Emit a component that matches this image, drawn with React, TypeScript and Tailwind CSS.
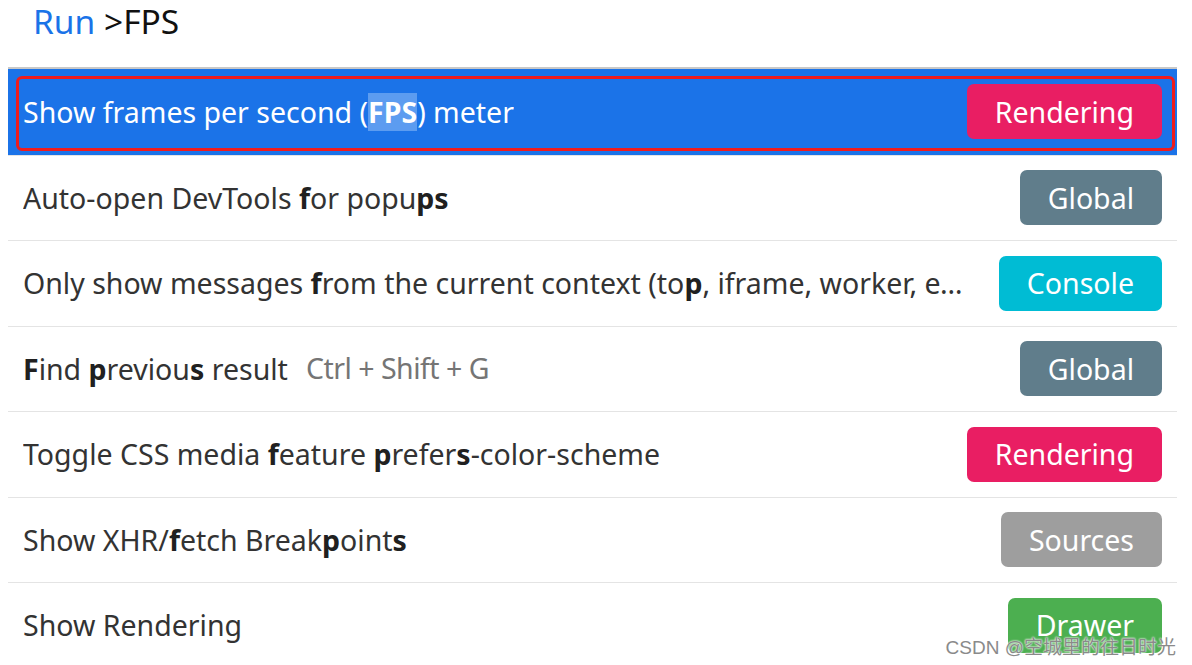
import React from "react";

type Seg = { t: string; b?: boolean; hl?: boolean };

const badgeColors: Record<string, string> = {
  Rendering: "bg-[#e91e63]",
  Global: "bg-[#607d8b]",
  Console: "bg-[#00bcd4]",
  Sources: "bg-[#9e9e9e]",
  Drawer: "bg-[#4caf50]",
};

function Badge({ name }: { name: string }) {
  return (
    <span
      className={`${badgeColors[name]} shrink-0 h-[55px] px-[28px] rounded-[7px] flex items-center text-white text-[28.5px] leading-none`}
    >
      {name}
    </span>
  );
}

function Row({
  segs,
  badge,
  shortcut,
  selected,
}: {
  segs: Seg[];
  badge: string;
  shortcut?: string;
  selected?: boolean;
}) {
  return (
    <div
      className={`relative h-[85.5px] flex items-center gap-[30px] pl-[15px] pr-[15px] ${
        selected ? "bg-[#1b73e8] text-white" : "border-t border-[#e4e4e4] text-[#333]"
      }`}
    >
      <div className="flex-1 min-w-0 flex items-center">
        <span className="truncate leading-[44px]">
          {segs.map((s, i) => (
            <span
              key={i}
              className={`${s.b ? "font-bold" : ""} ${s.hl ? "bg-[#5c9cf0]" : ""} ${
                selected ? "" : s.b ? "text-[#202020]" : ""
              }`}
            >
              {s.t}
            </span>
          ))}
        </span>
        {shortcut && (
          <span className="ml-[18px] text-[#757575] shrink-0 tracking-[-0.5px]">{shortcut}</span>
        )}
      </div>
      <Badge name={badge} />
      {selected && (
        <div className="absolute left-[8px] right-[2px] top-[7px] bottom-[4px] border-[3.5px] border-[#f01c1c] rounded-[6px] pointer-events-none" />
      )}
    </div>
  );
}

export default function App() {
  return (
    <div
      className="relative w-[1192px] h-[665px] overflow-hidden bg-white"
      style={{ fontFamily: '"Noto Sans", "Open Sans", sans-serif' }}
    >
      <div className="h-[67px] pl-[33px] pt-[1px] flex items-start">
        <div className="text-[33.5px] leading-[40px] whitespace-nowrap">
          <span className="text-[#1a73e8]">Run</span>{" "}
          <span className="text-[#111]">&gt;FPS</span>
        </div>
      </div>
      <div className="ml-[8px] w-[1169px] border-t-2 border-[#c8c8c8] text-[28.5px]">
        <Row
          selected
          segs={[
            { t: "Show frames per second (" },
            { t: "FPS", b: true, hl: true },
            { t: ") meter" },
          ]}
          badge="Rendering"
        />
        <Row
          segs={[
            { t: "Auto-open DevTools " },
            { t: "f", b: true },
            { t: "or popu" },
            { t: "ps", b: true },
          ]}
          badge="Global"
        />
        <Row
          segs={[
            { t: "Only show messages " },
            { t: "f", b: true },
            { t: "rom the current context (to" },
            { t: "p", b: true },
            { t: ", iframe, worker, extension)" },
          ]}
          badge="Console"
        />
        <Row
          segs={[
            { t: "F", b: true },
            { t: "ind " },
            { t: "p", b: true },
            { t: "reviou" },
            { t: "s", b: true },
            { t: " result" },
          ]}
          shortcut="Ctrl + Shift + G"
          badge="Global"
        />
        <Row
          segs={[
            { t: "Toggle CSS media " },
            { t: "f", b: true },
            { t: "eature " },
            { t: "p", b: true },
            { t: "refer" },
            { t: "s", b: true },
            { t: "-color-scheme" },
          ]}
          badge="Rendering"
        />
        <Row
          segs={[
            { t: "Show XHR/" },
            { t: "f", b: true },
            { t: "etch Break" },
            { t: "p", b: true },
            { t: "oint" },
            { t: "s", b: true },
          ]}
          badge="Sources"
        />
        <Row segs={[{ t: "Show Rendering" }]} badge="Drawer" />
      </div>
      <div
        className="absolute right-[16px] bottom-[8px] text-[19px] leading-none text-[#8a8a8a]"
        style={{
          fontFamily: '"Liberation Sans", "Noto Sans CJK SC", sans-serif',
          textShadow: "0 0 2px #fff, 0 0 2px #fff",
        }}
      >
        CSDN @空城里的往日时光
      </div>
    </div>
  );
}
